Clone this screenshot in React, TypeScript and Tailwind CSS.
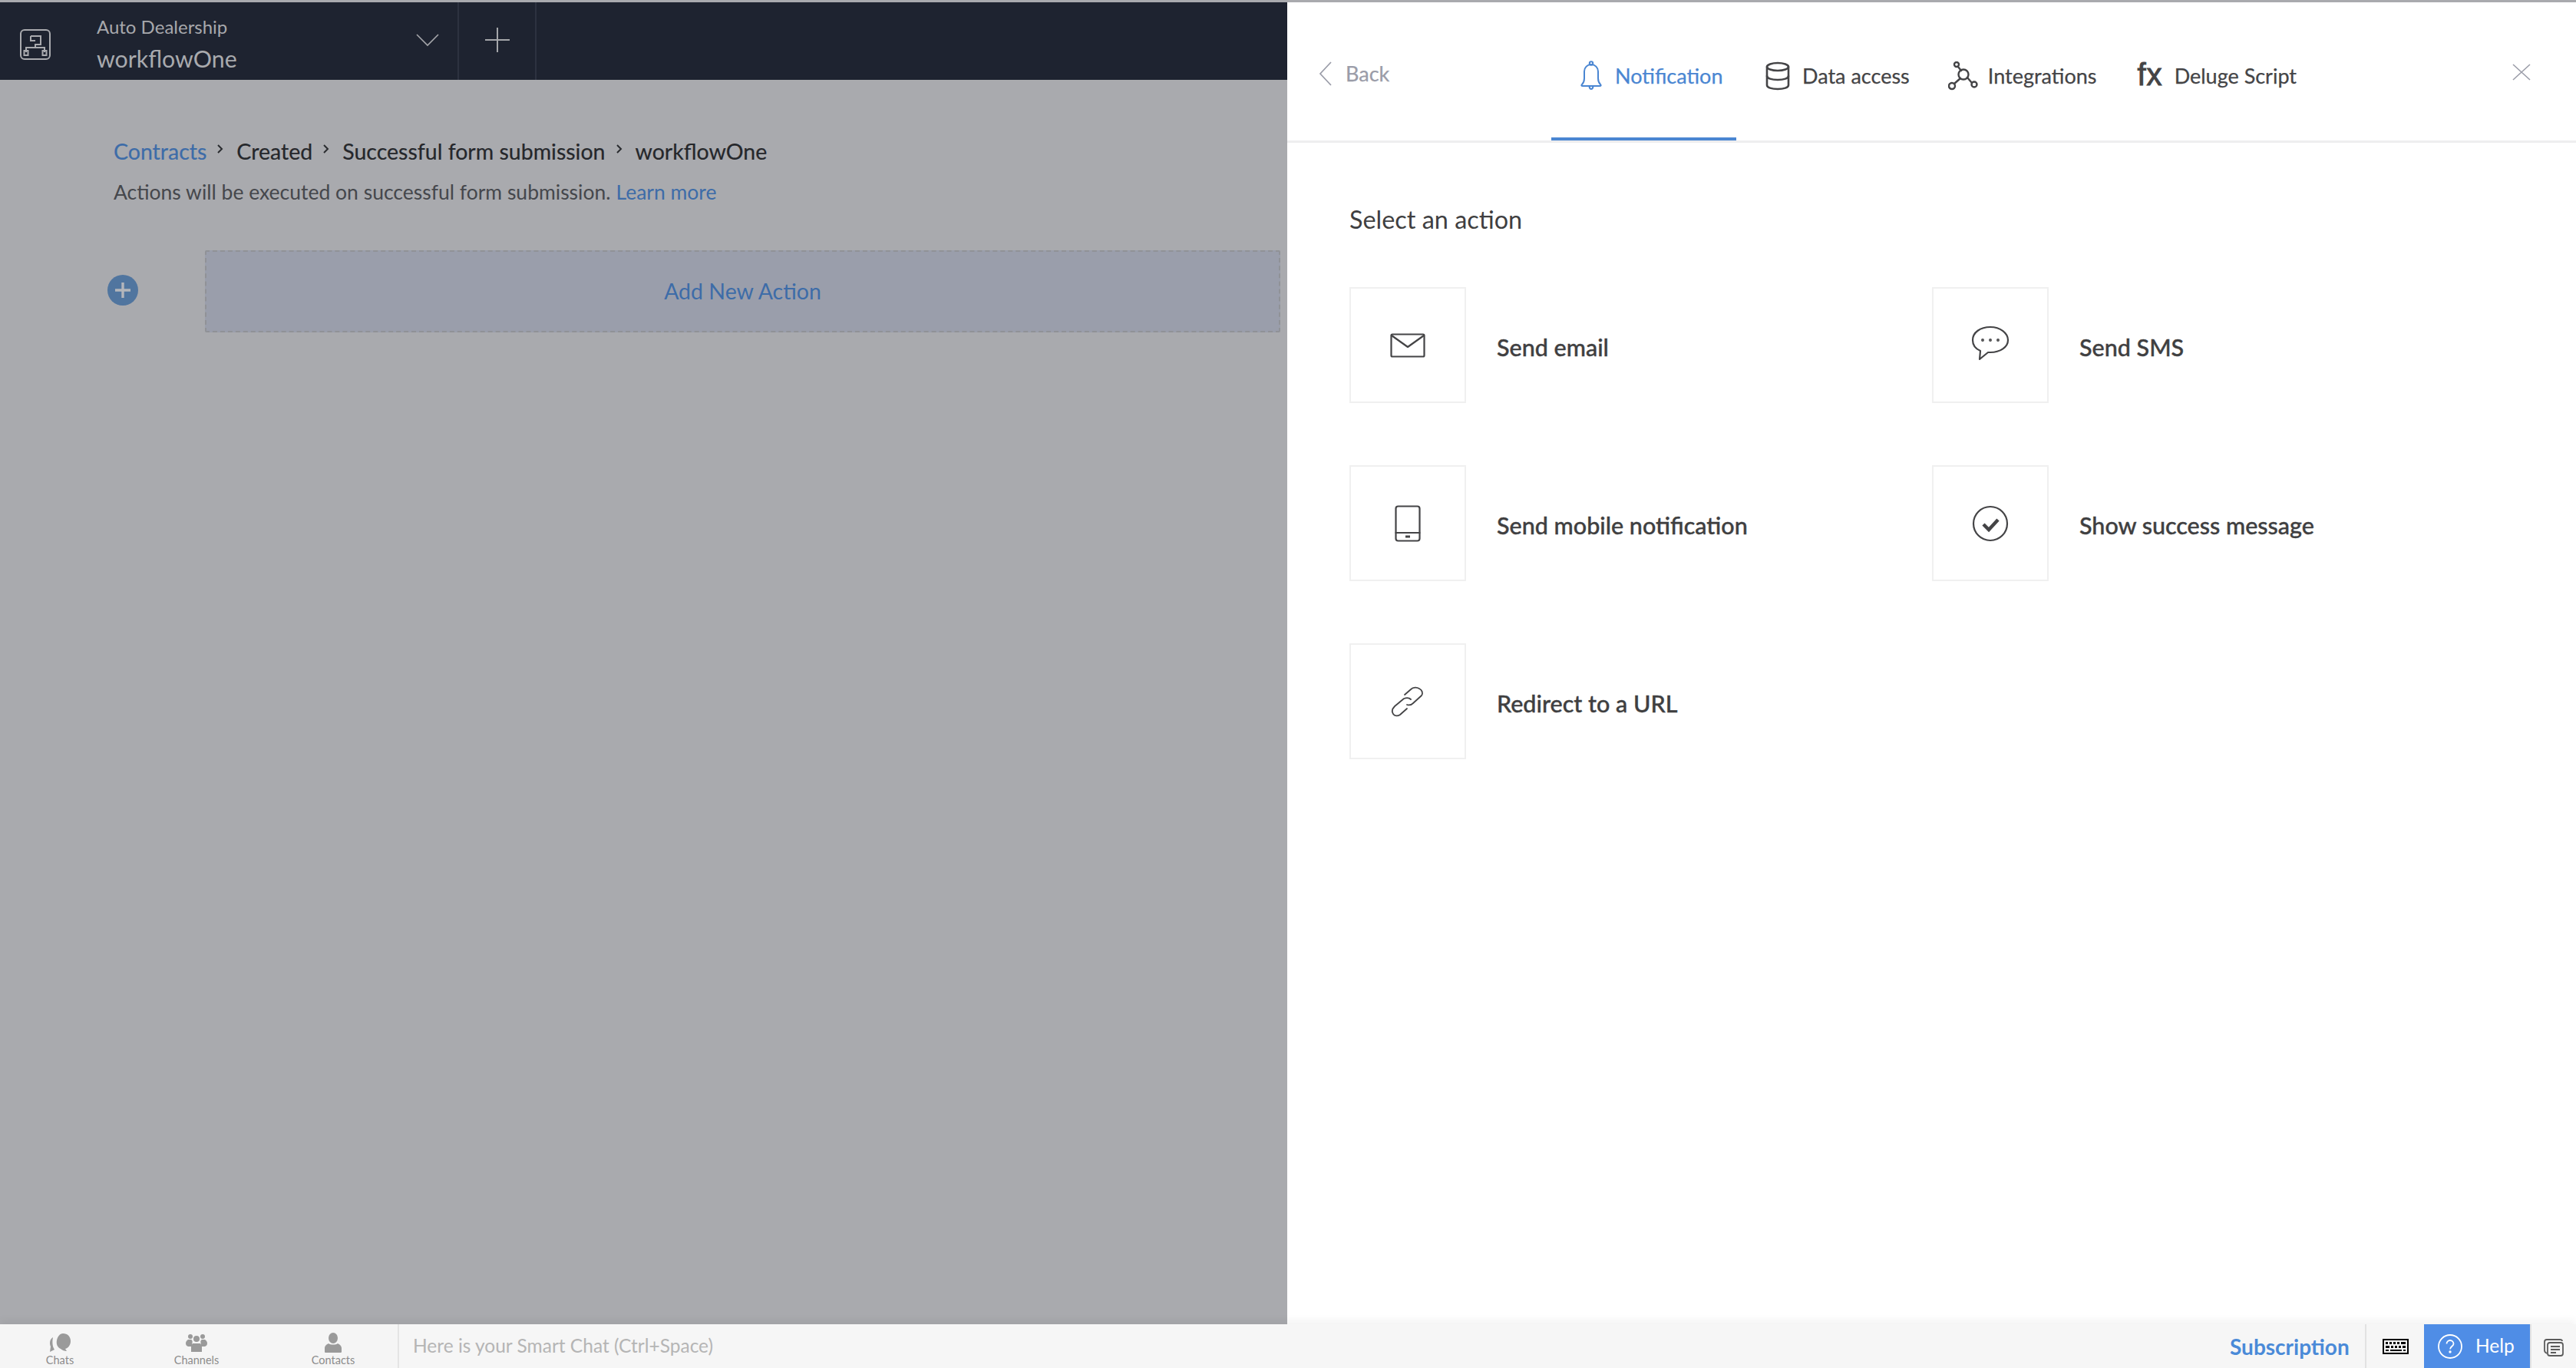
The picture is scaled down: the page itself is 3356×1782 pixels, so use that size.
import React from "react";

const LATO = "font-['Lato','Liberation_Sans',sans-serif]";

function Chevron() {
  return (
    <svg width="9" height="14" viewBox="0 0 9 14" className="ml-[13px] mr-[17px] mb-[6px] shrink-0" fill="none" stroke="#2a2c30" strokeWidth="2">
      <path d="M2 2l5 5-5 5" />
    </svg>
  );
}

function WorkflowLogo() {
  return (
    <svg width="42" height="42" viewBox="0 0 42 42" fill="none" stroke="#a9aaae" strokeWidth="2">
      <rect x="2" y="2" width="38" height="38" rx="5" />
      <path d="M15 10h13v11h-7v4" strokeWidth="2" />
      <path d="M15 10v6h6" strokeWidth="2" />
      <path d="M9 31v-6h24v6" />
      <rect x="6.5" y="29" width="5" height="6" />
      <rect x="30.5" y="29" width="5" height="6" />
    </svg>
  );
}

function Card({ label, children, w }: { label: string; children: React.ReactNode; w: string }) {
  return (
    <div className={`flex items-center ${w}`}>
      <div className="w-[152px] h-[151px] shrink-0 border-2 border-[#f0f0f0] flex items-center justify-center">{children}</div>
      <span className="ml-[40px] mt-[5px] text-[30.5px] leading-[36px] font-medium text-[#3f3f41] [-webkit-text-stroke:0.4px_#3f3f41]">{label}</span>
    </div>
  );
}

const st = { fill: "none", stroke: "#444446", strokeWidth: 2.2, strokeLinecap: "round" as const, strokeLinejoin: "round" as const };

export default function App() {
  return (
    <div className={`w-[3356px] h-[1782px] flex flex-col overflow-hidden bg-[#a9aaae] ${LATO}`}>
      <div className="h-[3px] shrink-0 bg-[#a9aaae]" />
      <div className="flex-1 min-h-0 flex">
        {/* Left, dimmed page */}
        <div className="w-[1677px] shrink-0 flex flex-col bg-[#a9aaae]">
          <div className="h-[101px] shrink-0 bg-[#1e2330] flex items-center">
            <div className="ml-[25px] mt-[8px]"><WorkflowLogo /></div>
            <div className="ml-[59px] w-[415px] flex flex-col pt-[8px]">
              <span className="text-[24px] leading-[30px] text-[#a7a8ac]">Auto Dealership</span>
              <span className="text-[30.3px] leading-[40px] text-[#a9aaae] mt-[6px]">workflowOne</span>
            </div>
            <svg width="32" height="18" viewBox="0 0 32 18" fill="none" stroke="#a5a6aa" strokeWidth="1.6" className="mb-[4px]">
              <path d="M2 2l14 14L30 2" />
            </svg>
            <div className="ml-[23px] w-[103px] h-full border-x-2 border-[#2d3240] flex items-center justify-center">
              <svg width="34" height="34" viewBox="0 0 34 34" stroke="#a5a6aa" strokeWidth="2" className="mb-[3px]">
                <path d="M17 1v32M1 17h32" />
              </svg>
            </div>
          </div>
          <div className="pl-[148px] pt-[74px]">
            <div className="flex items-center text-[28.5px] leading-[38px] text-[#25272b] [-webkit-text-stroke:0.2px_currentColor]">
              <span className="text-[#3d6ca8]">Contracts</span>
              <Chevron />
              <span>Created</span>
              <Chevron />
              <span>Successful form submission</span>
              <Chevron />
              <span>workflowOne</span>
            </div>
            <div className="mt-[16px] text-[26.5px] leading-[36px] text-[#45474c]">
              Actions will be executed on successful form submission.
              <span className="ml-[7px] text-[#3d6ca8]">Learn more</span>
            </div>
          </div>
          <div className="mt-[58px] flex items-center">
            <div className="ml-[140px] mb-[3px] w-[40px] h-[40px] rounded-full bg-[#50759f] flex items-center justify-center">
              <svg width="22" height="22" viewBox="0 0 22 22" stroke="#b4b6bb" strokeWidth="3.4"><path d="M11 1v20M1 11h20" /></svg>
            </div>
            <div className="ml-[87px] w-[1401px] h-[107px] bg-[#9a9eab] border-2 border-dashed border-[#909297] rounded-[2px] flex items-center justify-center text-[28.5px] text-[#3d6ca8]">
              Add New Action
            </div>
          </div>
        </div>

        {/* Right panel */}
        <div className="flex-1 min-w-0 bg-white flex flex-col">
          <div className="h-[183px] shrink-0 border-b-[3px] border-[#eeeeef] flex items-start">
            <div className="flex items-center h-[180px] text-[#444446] text-[27px] pt-[12px] [-webkit-text-stroke:0.25px_currentColor]">
              <svg width="18" height="32" viewBox="0 0 18 32" fill="none" stroke="#9a9ca8" strokeWidth="1.7" className="ml-[41px] mb-[6px]">
                <path d="M16 1L2 16l14 15" />
              </svg>
              <span className="ml-[17px] w-[60px] text-[#9a9ca8] mb-[6px]">Back</span>

              <div className="ml-[208px] w-[241px] h-[180px] -mt-[12px] flex items-center relative pl-[36px] pt-[12px]">
                <svg width="32" height="40" viewBox="0 0 32 40" {...st} stroke="#4a86d2" strokeWidth="2">
                  <path d="M4 31c2-2 3-5 3-8v-9c0-5 4-9 9-9s9 4 9 9v9c0 3 1 6 3 8 1 1 1 2-1 2H5c-2 0-2-1-1-2z" />
                  <circle cx="16" cy="3.5" r="2.2" />
                  <path d="M13.5 33.5c.3 2 1.2 3.5 2.5 3.5s2.2-1.500 2.500-3.500" />
                </svg>
                <span className="ml-[15px] text-[#4a86d2]">Notification</span>
                <div className="absolute left-0 right-0 bottom-0 h-[4px] bg-[#4a86d2]" />
              </div>

              <svg width="32" height="38" viewBox="0 0 32 38" {...st} className="ml-[38px]" strokeWidth="2.6">
                <ellipse cx="16" cy="7" rx="14" ry="5" />
                <path d="M2 7v24c0 3 6 5 14 5s14-2 14-5V7" />
                <path d="M2 19c0 3 6 5 14 5s14-2 14-5" />
              </svg>
              <span className="ml-[16px]">Data access</span>

              <svg width="40" height="38" viewBox="0 0 40 38" {...st} className="ml-[50px]" strokeWidth="2.4">
                <circle cx="20" cy="17" r="6.500" />
                <circle cx="11" cy="4" r="3" />
                <circle cx="5" cy="32" r="4" />
                <circle cx="34" cy="30" r="3.500" />
                <path d="M13 7l4 5M16 22L8 29M25 21l6 7" />
              </svg>
              <span className="ml-[12px]">Integrations</span>

              <span className="ml-[53px] text-[40px] leading-none text-[#444446] tracking-[1px] mb-[4px] font-['Liberation_Sans',sans-serif] [-webkit-text-stroke:1px_#444446]">fx</span>
              <span className="ml-[15px]">Deluge Script</span>

              <svg width="24" height="22" viewBox="0 0 24 22" stroke="#9a9ca8" strokeWidth="1.6" className="ml-[281px] mb-[10px]">
                <path d="M1 1l22 20M23 1L1 21" />
              </svg>
            </div>
          </div>

          <div className="pl-[81px] pt-[78px]">
            <div className="text-[32.4px] leading-[44px] text-[#3f3f41]">Select an action</div>
            <div className="mt-[66px] flex flex-col gap-[81px]">
              <div className="flex">
                <Card label="Send email" w="w-[759px]">
                  <svg width="46" height="32" viewBox="0 0 46 32" {...st}>
                    <rect x="1.500" y="1.500" width="43" height="29" rx="1.500" />
                    <path d="M2 3l21 15L44 3" />
                  </svg>
                </Card>
                <Card label="Send SMS" w="w-[600px]">
                  <svg width="50" height="48" viewBox="0 0 50 48" {...st} className="mb-[4px]">
                    <path d="M25 2C12 2 2 9 2 19c0 6 3 11 10 14l-1 11 11-9c1 0 2 0 3 0 13 0 23-7 23-16S38 2 25 2z" />
                    <circle cx="15" cy="19" r="1.200" strokeWidth="1.500" />
                    <circle cx="25" cy="19" r="1.200" strokeWidth="1.500" />
                    <circle cx="35" cy="19" r="1.200" strokeWidth="1.500" />
                  </svg>
                </Card>
              </div>
              <div className="flex">
                <Card label="Send mobile notification" w="w-[759px]">
                  <svg width="34" height="48" viewBox="0 0 34 48" {...st}>
                    <rect x="1.500" y="1.500" width="31" height="45" rx="3" />
                    <path d="M1.500 36h31" />
                    <path d="M14 41h6" strokeWidth="3" strokeLinecap="butt" />
                  </svg>
                </Card>
                <Card label="Show success message" w="w-[600px]">
                  <svg width="48" height="48" viewBox="0 0 48 48" {...st}>
                    <circle cx="24" cy="24" r="22" />
                    <path d="M15 25l7 7 12-13" strokeWidth="4.500" strokeLinecap="butt" strokeLinejoin="miter" />
                  </svg>
                </Card>
              </div>
              <div className="flex">
                <Card label="Redirect to a URL" w="w-[759px]">
                  <svg width="44" height="40" viewBox="0 0 44 40" {...st} strokeWidth="1.800">
                    <path d="M18 11l8-7c3-3 8-3 11-1 4 2 5 6 3 9L29 22c-2 2-5 3-8 2" />
                    <path d="M26 17c-2-2-6-2-9-1L5 26c-3 3-4 7-2 10 2 3 6 3 9 1l9-8" />
                  </svg>
                </Card>
              </div>
            </div>
          </div>
        </div>
      </div>

      {/* Bottom bar */}
      <div className="h-[57px] shrink-0 flex bg-[#f6f6f6] relative shadow-[0_-5px_10px_rgba(0,0,0,0.05)]">
        <div className="w-[520px] h-full bg-[#f5f5f5] border-r-2 border-[#e4e4e4] flex pl-[18px] gap-[58px] text-[14.500px] text-[#8c8c8c]">
          {[
            ["Chats", "chat"],
            ["Channels", "group"],
            ["Contacts", "person"],
          ].map(([l, k]) => (
            <div key={l} className="w-[120px] flex flex-col items-center pt-[11px]">
              <svg width="34" height="26" viewBox="0 0 34 26" fill="#9a9a9a">
                {k === "chat" && (
                  <>
                    <path d="M8 6C4 8 3 14 5 18l-1 7 6-3c-3-4-3-11-2-16z" />
                    <path d="M21 1c6 0 10 4 10 10 0 5-3 9-7 10l2 3c-3 0-6-1-8-3-4-2-6-6-5-11 1-5 4-9 8-9z" />
                  </>
                )}
                {k === "group" && (
                  <>
                    <circle cx="9" cy="5" r="3" />
                    <circle cx="25" cy="5" r="3" />
                    <circle cx="17" cy="8" r="4" />
                    <path d="M6 9h4c2 1 2 3 1 6v3H6c-2-1-3-2-3-4s1-4 3-5zM24 9h4c2 1 3 3 3 5s-1 3-3 4h-5v-3c-1-3-1-5 1-6z" />
                    <path d="M12 14h10c1 1 2 3 2 5v6H10v-6c0-2 1-4 2-5z" />
                  </>
                )}
                {k === "person" && (
                  <>
                    <ellipse cx="17" cy="7" rx="6" ry="7" />
                    <path d="M11 14c2 2 10 2 12 0 2 1 5 3 5 6v5a1 1 0 0 1-1 1H7a1 1 0 0 1-1-1v-5c0-3 3-5 5-6z" />
                  </>
                )}
              </svg>
              <span className="leading-[18px] mt-[1px]">{l}</span>
            </div>
          ))}
        </div>
        <div className="flex-1 flex items-center pl-[18px] text-[24.5px] text-[#b5b5b5] pb-[1px]">Here is your Smart Chat (Ctrl+Space)</div>
        <div className="flex items-stretch h-full">
          <div className="w-[200px] pl-[22px] flex items-center text-[28px] font-bold text-[#4a8ad8] border-r-2 border-[#e2e2e2]">Subscription</div>
          <div className="w-[75px] flex items-center justify-center">
            <svg width="34" height="20" viewBox="0 0 34 20" fill="#000">
              <path fillRule="evenodd" d="M0 0h34v20H0zM2 2v16h30V2z" />
              <path d="M4 4h3v3H4zM9 4h3v3H9zM14 4h3v3h-3zM19 4h3v3h-3zM24 4h6v3h-6zM4 9h5v3H4zM11 9h3v3h-3zM16 9h3v3h-3zM21 9h3v3h-3zM26 9h4v3h-4zM4 14h4v2H4zM10 14h15v2H10zM27 14h3v2h-3z" />
            </svg>
          </div>
          <div className="w-[138px] bg-[#4f8de6] flex items-center pl-[18px] text-white text-[24.5px]">
            <svg width="32" height="32" viewBox="0 0 32 32" fill="none" stroke="#fff" strokeWidth="1.800">
              <circle cx="16" cy="16" r="15" />
              <path d="M11.500 12.500c0-2.500 2-4.500 4.500-4.500s4.500 2 4.500 4.500c0 3-4.500 3.500-4.500 7" />
              <circle cx="16" cy="23" r="0.800" />
            </svg>
            <span className="ml-[17px]">Help</span>
          </div>
          <div className="w-[60px] border-l-2 border-[#e2e2e2] flex items-center justify-center">
            <svg width="28" height="26" viewBox="0 0 28 26" fill="none" stroke="#5c5c5c" strokeWidth="1.800">
              <path d="M5 22c-2-1-3-2-3-4V7c0-2 1-3 3-3h17c2 0 3 1 3 2" />
              <rect x="6" y="8" width="20" height="17" rx="3" fill="#f5f5f5" />
              <path d="M10 13h12M10 17h12M10 21h7" />
            </svg>
          </div>
        </div>
      </div>
    </div>
  );
}
